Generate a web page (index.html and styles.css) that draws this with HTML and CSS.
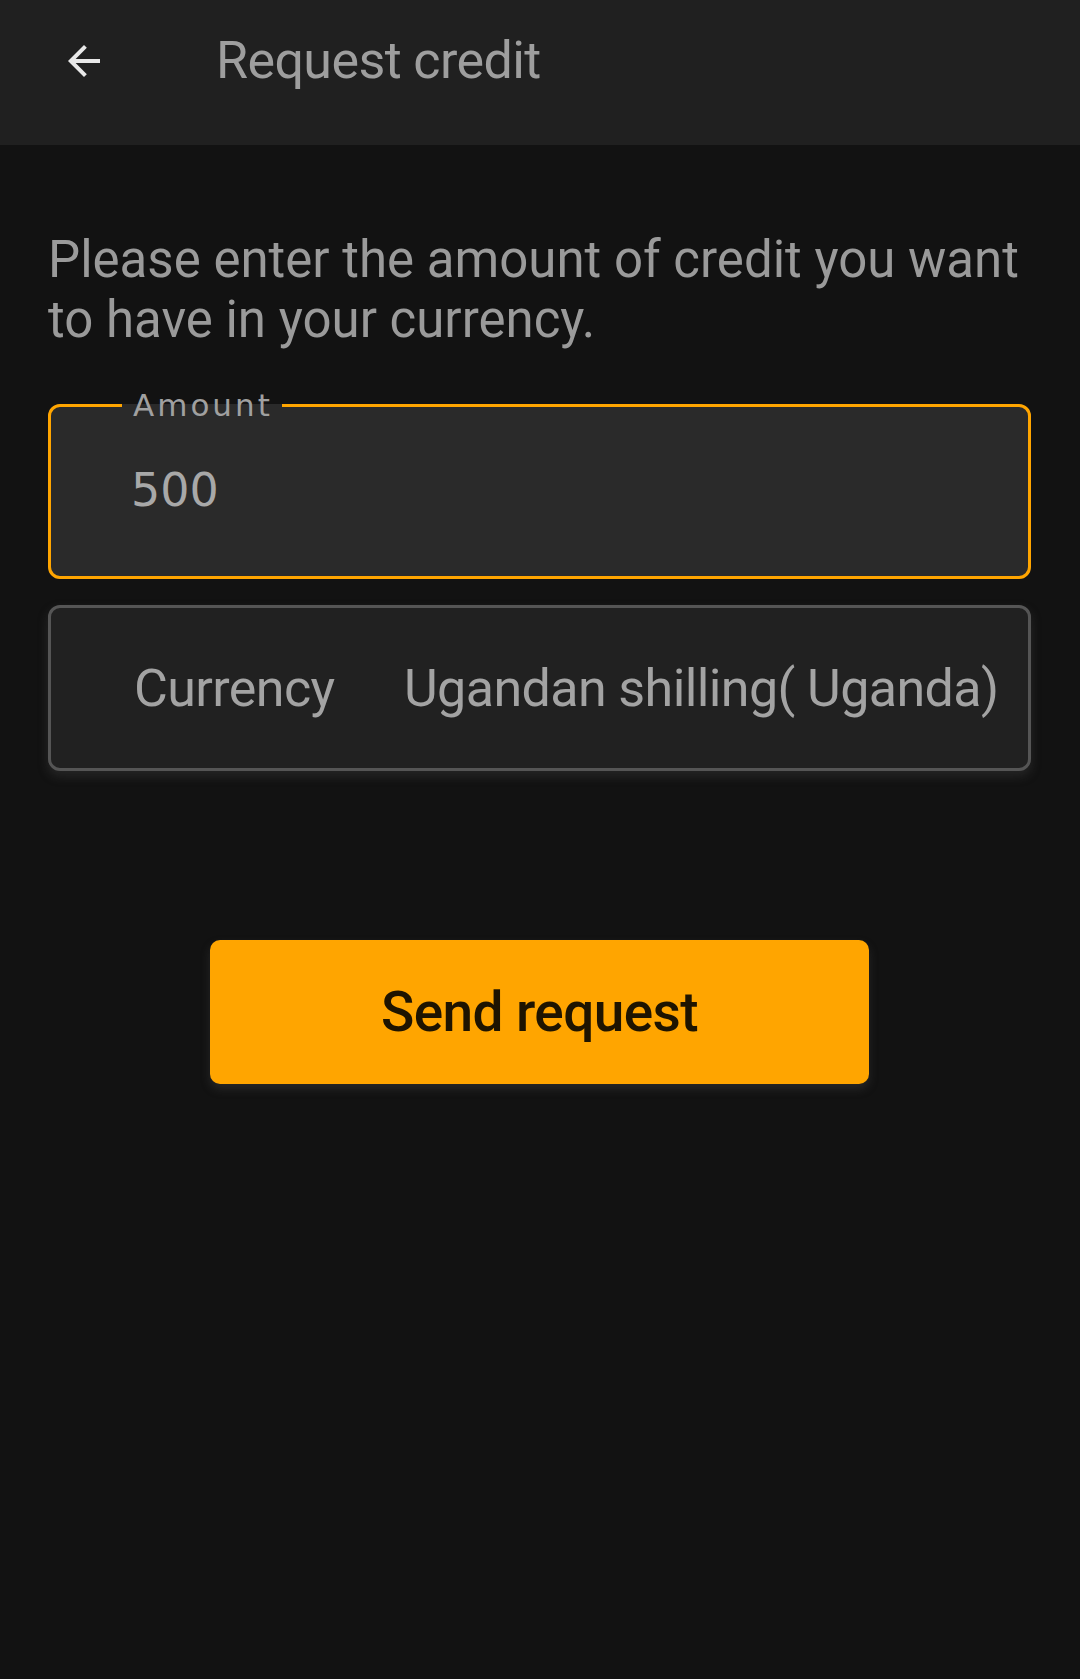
FILE: index.html
```html
<!DOCTYPE html>
<html lang="en">
<head>
<meta charset="utf-8">
<title>Request credit</title>
<link rel="stylesheet" href="styles.css">
</head>
<body>
<header class="appbar">
  <button class="back" aria-label="Back">
    <svg viewBox="0 0 24 24" width="48" height="48"><path d="M20 11H7.83l5.59-5.59L12 4l-8 8 8 8 1.41-1.41L7.83 13H20v-2z" fill="#e8e8e8"/></svg>
  </button>
  <h1 class="title">Request credit</h1>
</header>
<main class="content">
  <p class="intro">Please enter the amount of credit you want to have in your currency.</p>
  <fieldset class="amount">
    <legend class="amount-label">Amount</legend>
    <div class="amount-value">500</div>
  </fieldset>
  <div class="currency">
    <span class="currency-label">Currency</span>
    <span class="currency-value">Ugandan shilling( Uganda)</span>
  </div>
  <div class="actions">
    <button class="send">Send request</button>
  </div>
</main>
</body>
</html>
```
FILE: styles.css
```css
html, body {
  margin: 0;
  padding: 0;
  background: #121212;
}
body {
  font-family: Roboto, "Noto Sans", sans-serif;
  min-height: 1679px;
}
.appbar {
  height: 145px;
  box-sizing: border-box;
  background: #202020;
  display: flex;
  align-items: flex-start;
  padding: 37px 0 0 60px;
}
.back {
  width: 48px;
  height: 48px;
  padding: 0;
  border: 0;
  background: none;
  display: block;
}
.back svg { display: block; }
.title {
  margin: 0 0 0 108px;
  font-size: 52px;
  line-height: 48px;
  letter-spacing: -0.6px;
  font-weight: 400;
  color: #9e9e9e;
}
.content {
  padding: 0 49px 0 48px;
}
.intro {
  margin: 85px 0 0;
  font-size: 51px;
  line-height: 60px;
  color: #9a9a9a;
}
.amount {
  margin: 39px 0 0;
  padding: 0;
  min-inline-size: 0;
  border: 3px solid #ffa500;
  border-radius: 12px;
  background: #2a2a2a;
}
.amount-label {
  margin-left: 71px;
  padding: 0 9px 0 11px;
  font-family: "DejaVu Sans", sans-serif;
  font-size: 31px;
  line-height: 32px;
  letter-spacing: 3px;
  color: #a0a0a0;
}
.amount-value {
  padding: 43px 0 60px 80px;
  font-family: "DejaVu Sans", sans-serif;
  font-size: 46px;
  line-height: 52px;
  color: #a8a8a8;
}
.currency {
  margin-top: 26px;
  height: 166px;
  box-sizing: border-box;
  border: 3px solid #555555;
  border-radius: 12px;
  background: #212121;
  box-shadow: 0 5px 10px 1px rgba(70, 70, 70, 0.35);
  display: flex;
  align-items: center;
  padding-left: 83px;
  font-size: 52px;
  letter-spacing: -0.6px;
  color: #a3a3a3;
}
.currency-label {
  width: 270px;
  flex: none;
}
.currency-value {
  white-space: nowrap;
}
.actions {
  display: flex;
  justify-content: center;
  margin-top: 169px;
}
.send {
  width: 659px;
  height: 144px;
  border: 0;
  border-radius: 10px;
  background: #ffa500;
  color: #1e1400;
  font-family: Roboto, sans-serif;
  font-weight: 500;
  font-size: 55px;
  letter-spacing: -0.6px;
  box-shadow: 0 5px 10px rgba(70, 70, 70, 0.4);
}
```
